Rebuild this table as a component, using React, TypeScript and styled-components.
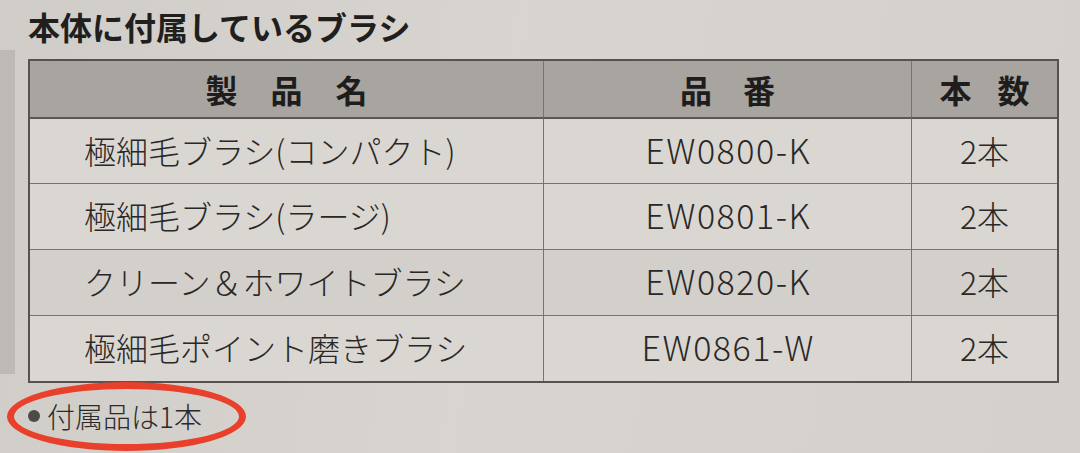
import React from "react";
import styled, { createGlobalStyle } from "styled-components";

const Global = createGlobalStyle`
  html, body { margin: 0; padding: 0; }
  body {
    width: 1080px;
    height: 453px;
    overflow: hidden;
    background: #d3d0cb;
    font-family: "Noto Sans CJK JP", "Noto Sans", sans-serif;
    color: #272523;
  }
`;

const Page = styled.div`
  position: relative;
  width: 1080px;
  height: 453px;
  box-sizing: border-box;
  padding: 0 21px 0 28px;
  display: flex;
  flex-direction: column;
  background: linear-gradient(100deg, #d0cdc8 0%, #d8d5d1 45%, #d4d1cc 100%);
`;

const EdgeTab = styled.div`
  position: absolute;
  left: 0;
  top: 50px;
  width: 15px;
  height: 324px;
  background: #bdbab6;
`;

const Title = styled.h1`
  margin: 0;
  height: 59px;
  box-sizing: border-box;
  padding-top: 9px;
  font-size: 32px;
  line-height: 34px;
  font-weight: 700;
  color: #211f1d;
`;

const Table = styled.div`
  display: grid;
  grid-template-columns: 513px 368px 1fr;
  grid-template-rows: 56px repeat(4, 66px);
  border: 2px solid #55524f;
  box-sizing: border-box;
  width: 1031px;
`;

const Cell = styled.div<{ $head?: boolean; $col: number; $row: number }>`
  display: flex;
  align-items: center;
  justify-content: ${(p) => (p.$col === 0 && !p.$head ? "flex-start" : "center")};
  padding-left: ${(p) => (p.$col === 0 && !p.$head ? "54px" : "0")};
  padding-bottom: ${(p) => (p.$head ? "0" : "3px")};
  border-left: ${(p) => (p.$col > 0 ? "1px solid #77736f" : "none")};
  border-top: ${(p) =>
    p.$row === 1 ? "2px solid #5a5754" : p.$row > 1 ? "1px solid #77736f" : "none"};
  background: ${(p) => (p.$head ? "#a8a5a1" : p.$row === 3 ? "#d3d0cc" : "#dad7d3")};
  font-size: 32px;
  line-height: 1;
  font-weight: ${(p) => (p.$head ? 700 : 300)};
  color: ${(p) => (p.$head ? "#1f1d1b" : "#2a2826")};
  white-space: nowrap;
`;

const Spaced = styled.span<{ $gap: number }>`
  letter-spacing: ${(p) => p.$gap}px;
  margin-right: -${(p) => p.$gap}px;
`;

const Code = styled.span`
  font-size: 34px;
  letter-spacing: 1.5px;
  margin-right: -1.5px;
`;

const Footer = styled.div`
  flex: 1;
  display: flex;
  align-items: center;
  padding-bottom: 4px;
`;

const Note = styled.div`
  position: relative;
  display: flex;
  align-items: center;
  gap: 7px;
  font-size: 28px;
  line-height: 1;
  font-weight: 300;
  color: #2c2a28;
`;

const Bullet = styled.span`
  width: 12px;
  height: 12px;
  border-radius: 50%;
  background: #4d4b49;
`;

const Circle = styled.span`
  position: absolute;
  left: -21px;
  top: -20px;
  width: 239px;
  height: 69px;
  box-sizing: border-box;
  border: 7px solid #e8402a;
  border-radius: 50%;
  pointer-events: none;
`;

const heads = [
  { t: "製品名", gap: 33 },
  { t: "品番", gap: 31 },
  { t: "本数", gap: 26 },
];

const rows = [
  ["極細毛ブラシ(コンパクト)", "EW0800-K", "2本"],
  ["極細毛ブラシ(ラージ)", "EW0801-K", "2本"],
  ["クリーン＆ホワイトブラシ", "EW0820-K", "2本"],
  ["極細毛ポイント磨きブラシ", "EW0861-W", "2本"],
];

export default function App() {
  return (
    <>
      <Global />
      <Page>
        <EdgeTab />
        <Title>本体に付属しているブラシ</Title>
        <Table>
          {heads.map((h, c) => (
            <Cell key={h.t} $head $col={c} $row={0}>
              <Spaced $gap={h.gap}>{h.t}</Spaced>
            </Cell>
          ))}
          {rows.map((r, ri) => (
            <React.Fragment key={ri}>
              <Cell $col={0} $row={ri + 1}>{r[0]}</Cell>
              <Cell $col={1} $row={ri + 1}>
                <Code>{r[1]}</Code>
              </Cell>
              <Cell $col={2} $row={ri + 1}>{r[2]}</Cell>
            </React.Fragment>
          ))}
        </Table>
        <Footer>
          <Note>
            <Circle />
            <Bullet />
            付属品は1本
          </Note>
        </Footer>
      </Page>
    </>
  );
}
